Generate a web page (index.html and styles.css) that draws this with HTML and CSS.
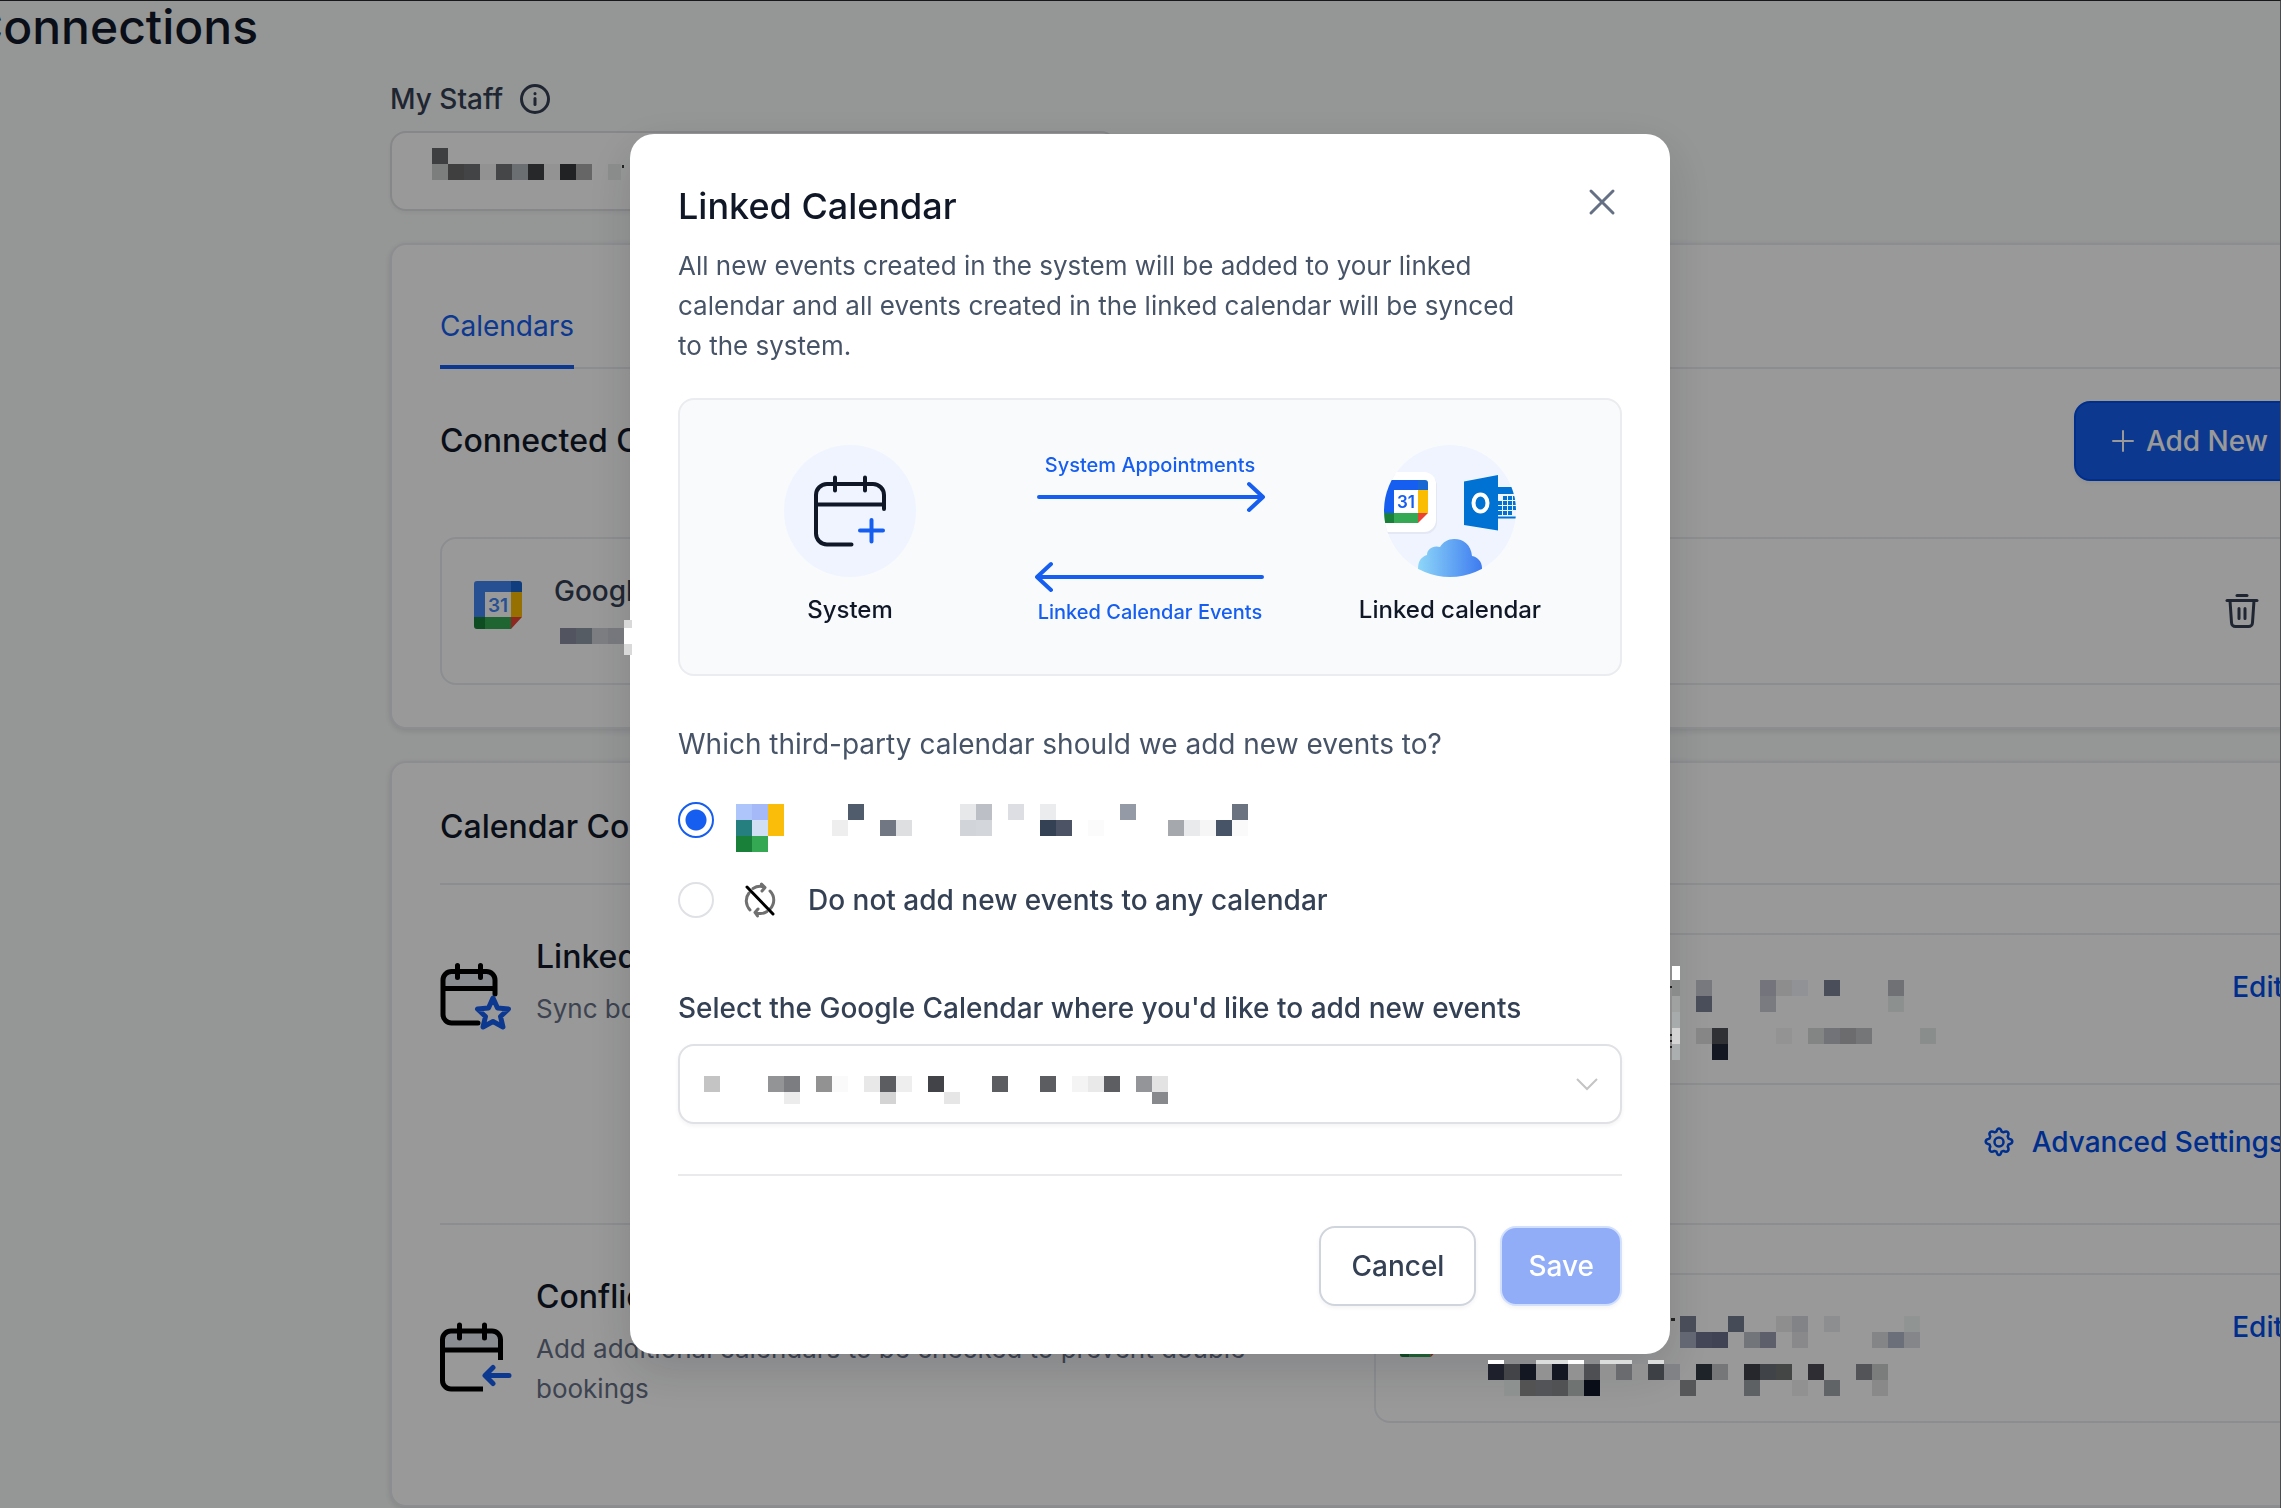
FILE: index.html
```html
<!DOCTYPE html>
<html lang="en">
  <head>
    <meta charset="utf-8">
    <meta name="viewport" content="width=device-width, initial-scale=1.0">
    <title>Connections</title>
    <link rel="stylesheet" href="styles.css">
  </head>
  <body>
    <svg class="defs" aria-hidden="true">
      <symbol id="gcal" viewBox="0 0 48 48">
        <path fill="#fff" d="M11 11h26v25H11z"/>
        <path fill="#4285f4" d="M3 0h34v11H11v25H0V3a3 3 0 0 1 3-3z"/>
        <path fill="#1967d2" d="M37 0h8a3 3 0 0 1 3 3v8H37z"/>
        <path fill="#fbbc04" d="M37 11h11v25H37z"/>
        <path fill="#34a853" d="M11 36h26v12H11z"/>
        <path fill="#188038" d="M0 36h11v12H3a3 3 0 0 1-3-3z"/>
        <path fill="#ea4335" d="M37 36h11L37 48z"/>
        <text x="24" y="31" text-anchor="middle" font-size="19" font-weight="600" fill="#4285f4">31</text>
      </symbol>
    </svg>

    <div class="page">
      <h1>Connections</h1>
      <main class="content">
        <div class="field-label">
          <label for="staff">My Staff</label>
          <svg width="30" height="30" viewBox="0 0 30 30" fill="none" stroke="#344054" stroke-width="3" stroke-linecap="round"><circle cx="15" cy="15" r="13.5"/><path d="M15 14.5v6"/><path d="M15 9.5v.2"/></svg>
        </div>
        <div class="select-wrap staff">
          <select id="staff"><option></option></select>
          <svg class="mosaic select-value staff-value" width="192" height="32" viewBox="0 0 192 32">
            <rect x="0" y="0" fill="#3d3f41"/>
            <rect x="0" y="16" fill="#7c7d7d"/><rect x="16" y="16" fill="#3f3f3f"/><rect x="32" y="16" fill="#424446"/><rect x="48" y="16" fill="#929292"/>
            <rect x="64" y="16" fill="#444648"/><rect x="80" y="16" fill="#6c6f72"/><rect x="96" y="16" fill="#26282a"/><rect x="112" y="16" fill="#939393"/>
            <rect x="128" y="16" fill="#202223"/><rect x="144" y="16" fill="#666"/>
            <path fill="#8a8c8c" d="M176 16h13v16h-13z"/><path fill="#222" d="M190 17h3v3h-3z"/>
          </svg>
        </div>

        <section class="card calendars">
          <nav class="tabs"><a class="tab" href="#calendars">Calendars</a></nav>
          <div class="card-head">
            <h2>Connected Calendars</h2>
            <button class="btn btn-primary" type="button">
              <svg width="22" height="22" viewBox="0 0 22 22" fill="none" stroke="#fff" stroke-width="2" stroke-linecap="round"><path d="M11 1v20M1 11h20"/></svg>
              Add New
            </button>
          </div>
          <div class="account">
            <svg class="account-logo" width="48" height="48"><use href="#gcal"/></svg>
            <div class="account-info">
              <span>Google Calendar</span>
              <svg class="mosaic" width="80" height="36" viewBox="-6 0 80 36">
                <rect x="0" y="8" fill="#52555f"/><rect x="16" y="8" fill="#565c63"/><rect x="32" y="8" fill="#7c7d80"/><rect x="48" y="8" fill="#75777d"/>
                <path fill="#d9d9d9" d="M64 0h8v35h-8z"/><path fill="#fff" d="M64 8h8v16h-8z"/>
              </svg>
            </div>
            <button class="icon-btn" type="button" aria-label="Delete">
              <svg width="40" height="40" viewBox="0 0 40 40" fill="none" stroke="#344054" stroke-width="3" stroke-linecap="round" stroke-linejoin="round"><path d="M15 4.500h10"/><path d="M5 9.500h30"/><path d="M8 9.500l1.500 22a4 4 0 0 0 4 4h13a4 4 0 0 0 4-4l1.500-22"/><path d="M17 17.500v10M23 17.500v10"/></svg>
            </button>
          </div>
        </section>

        <section class="card config">
          <h2>Calendar Configuration</h2>
          <div class="setting setting-linked">
            <div class="setting-about">
              <svg width="72" height="68" viewBox="0 0 72 68" fill="none" stroke="#000" stroke-width="5" stroke-linecap="round" stroke-linejoin="round">
                <path stroke="none" fill="#e4eaf2" d="M3 25V16a8 8 0 0 1 8-8h36a8 8 0 0 1 8 8v9z"/>
                <path d="M55 31V17a8.500 8.500 0 0 0-8.500-8.500h-35A8.500 8.500 0 0 0 3 17v34.500A8.500 8.500 0 0 0 11.500 60H38M3 25.500h52M17.500 2.500v12M40.500 2.500v12"/>
                <path stroke="#155eef" fill="#fff" d="M53 35l4.500 10 11 1-8 7.500L63 64l-10-5.500L43 64l2.500-10.500-8-7.500 11-1z"/>
              </svg>
              <div class="setting-text">
                <h3>Linked Calendar</h3>
                <p>Sync both your calendars</p>
              </div>
            </div>
            <div class="setting-value">
              <div class="chosen">
                <svg class="chosen-logo" width="40" height="40"><use href="#gcal"/></svg>
                <svg class="mosaic" width="448" height="112" viewBox="0 -27 448 112">
                  <path fill="#fff" d="M184-14h8V0h-8z"/><path fill="#8a8c8c" d="M184 0h8v16h-8z"/><path fill="#a0a2a2" d="M184 16h8v16h-8z"/><path fill="#a8abab" d="M184 32h8v16h-8z"/><path fill="#d4d4d4" d="M184 48h8v16h-8z"/><path fill="#abafaf" d="M184 64h8v16h-8z"/>
                  <path fill="#222" d="M182 6h2v2h-2zM182 54h2v2h-2zM182 60h2v2h-2zM182 66h2v2h-2z"/>
                  <rect x="208" y="0" fill="#78797f"/><rect x="208" y="16" fill="#4a4e5b"/><rect x="272" y="0" fill="#73747c"/><rect x="272" y="16" fill="#7a7b80"/>
                  <rect x="288" y="0" fill="#8d8d8d"/><rect x="304" y="0" fill="#909296"/><rect x="336" y="0" fill="#4a4e5b"/><rect x="400" y="0" fill="#6f7175"/><rect x="400" y="16" fill="#8c908f"/>
                  <rect x="208" y="48" fill="#868686"/><rect x="224" y="48" fill="#303135"/><rect x="224" y="64" fill="#131722"/><rect x="288" y="48" fill="#939393"/>
                  <rect x="320" y="48" fill="#838484"/><rect x="336" y="48" fill="#717378"/><rect x="352" y="48" fill="#6c6c6e"/><rect x="368" y="48" fill="#757678"/><rect x="432" y="48" fill="#898d8c"/>
                </svg>
                <a class="link" href="#edit-linked">Edit</a>
              </div>
              <a class="link advanced" href="#advanced">
                <svg width="30" height="30" viewBox="0 0 30 30" fill="none" stroke="#004eeb" stroke-width="2.500" stroke-linejoin="round"><circle cx="15" cy="15" r="4.500"/><path d="M12.500 4.500C13 2.500 13.500 1.500 15 1.500s2 1 2.500 3l2 .8c2-1.200 3.300-1.200 4.300-.2s1 2.300-.1 4.200l.8 2.200c2.300.5 3.800 1.500 3.800 3s-1.500 2.500-3.800 3l-.8 2.200c1.200 2 1.200 3.300.1 4.300s-2.300 1-4.300-.1l-2 .8c-.5 2-1 3.300-2.500 3.300s-2-1.300-2.500-3.300l-2-.8c-2 1.200-3.300 1.200-4.300.1s-1-2.300.1-4.300l-.8-2.200c-2.300-.5-3.800-1.500-3.800-3s1.500-2.500 3.800-3l.8-2.200C5.100 7.400 5.100 6.100 6.200 5.100s2.300-1 4.300.2z"/></svg>
                Advanced Settings
              </a>
            </div>
          </div>
          <div class="setting">
            <div class="setting-about">
              <svg width="72" height="70" viewBox="0 0 72 70" fill="none" stroke="#000" stroke-width="5" stroke-linecap="round" stroke-linejoin="round">
                <path stroke="none" fill="#e4eaf2" d="M3 27V17a8 8 0 0 1 8-8h41a8 8 0 0 1 8 8v10z"/>
                <path stroke-linecap="butt" d="M60.500 38V17.500A8.500 8.500 0 0 0 52 9H11a8.500 8.500 0 0 0-8.500 8.500v41A8.500 8.500 0 0 0 11 67h32M3 28h57"/>
                <path d="M19.500 3v13M44.500 3v13"/>
                <path stroke="#155eef" d="M69 53.500H46M53 45.500l-8 8 8 8"/>
              </svg>
              <div class="setting-text">
                <h3>Conflict Calendars</h3>
                <p>Add additional calendars to be checked to prevent double bookings</p>
              </div>
            </div>
            <div class="setting-value">
              <div class="chosen">
                <svg class="chosen-logo" width="40" height="40"><use href="#gcal"/></svg>
                <svg class="mosaic" width="448" height="112" viewBox="0 -24 448 112">
                  <path fill="#222" d="M183 2h4v3h-4z"/>
                  <rect x="192" y="0" fill="#484d59"/><rect x="240" y="0" fill="#454b57"/><rect x="288" y="0" fill="#8e8e8e"/><rect x="304" y="0" fill="#828386"/><rect x="336" y="0" fill="#8c8e8f"/><rect x="416" y="0" fill="#909493"/>
                  <rect x="192" y="16" fill="#636673"/><rect x="208" y="16" fill="#424656"/><rect x="224" y="16" fill="#3f4353"/><rect x="256" y="16" fill="#727579"/><rect x="272" y="16" fill="#5d606b"/><rect x="304" y="16" fill="#89898b"/><rect x="384" y="16" fill="#838586"/><rect x="400" y="16" fill="#6b6f7a"/><rect x="416" y="16" fill="#85868a"/>
                  <path fill="#fff" d="M0 44h16v4H0zM80 44h16v4H80z"/><path fill="#dcdede" d="M48 44h32v4H48zM112 44h32v4h-32zM160 44h16v4h-16z"/>
                  <path fill="#929292" d="M48 48h16v16H48zM80 48h16v16H80zM112 48h16v16h-16zM144 48h16v16h-16z"/>
                  <rect x="0" y="48" fill="#1e212c"/><rect x="16" y="48" fill="#434447"/><rect x="32" y="48" fill="#131722"/><rect x="64" y="48" fill="#131722"/><rect x="96" y="48" fill="#4d4f52"/><rect x="128" y="48" fill="#696b6f"/><rect x="160" y="48" fill="#3d4145"/><rect x="176" y="48" fill="#808285"/><rect x="208" y="48" fill="#1e2229"/><rect x="224" y="48" fill="#767779"/><rect x="256" y="48" fill="#25272d"/><rect x="272" y="48" fill="#404347"/><rect x="288" y="48" fill="#444646"/><rect x="320" y="48" fill="#2d2d33"/><rect x="368" y="48" fill="#525458"/><rect x="384" y="48" fill="#7b7c7c"/>
                  <rect x="16" y="64" fill="#8d9190"/><rect x="32" y="64" fill="#535353"/><rect x="48" y="64" fill="#535457"/><rect x="64" y="64" fill="#505253"/><rect x="80" y="64" fill="#6f7371"/><rect x="96" y="64" fill="#090d18"/><rect x="192" y="64" fill="#555759"/><rect x="256" y="64" fill="#5d6164"/><rect x="304" y="64" fill="#919191"/><rect x="336" y="64" fill="#606466"/><rect x="384" y="64" fill="#898989"/>
                </svg>
                <a class="link" href="#edit-conflict">Edit</a>
              </div>
            </div>
          </div>
        </section>
      </main>
    </div>

    <div class="overlay">
      <form class="modal" role="dialog" aria-labelledby="modalTitle">
        <header class="modal-head">
          <h2 id="modalTitle">Linked Calendar</h2>
          <button class="icon-btn" type="button" aria-label="Close">
            <svg width="40" height="40" viewBox="0 0 40 40" fill="none" stroke="#667085" stroke-width="3" stroke-linecap="round"><path d="M9 9l22 22M31 9L9 31"/></svg>
          </button>
        </header>
        <p class="modal-desc">All new events created in the system will be added to your linked calendar and all events created in the linked calendar will be synced to the system.</p>

        <div class="diagram">
          <figure>
            <svg width="132" height="132" viewBox="0 0 132 132" fill="none" stroke="#101828" stroke-width="4" stroke-linecap="round" stroke-linejoin="round">
              <circle cx="66" cy="66" r="66" fill="#eff4ff" stroke="none"/>
              <path d="M100 64V50a11 11 0 0 0-11-11H43a11 11 0 0 0-11 11v38.500a11 11 0 0 0 11 11h24.500M32 59.500h68M51 32.500v13M81 32.500v13"/>
              <path stroke="#155eef" d="M87.500 75v21.500M76 85.500h23"/>
            </svg>
            <figcaption>System</figcaption>
          </figure>
          <div class="flow">
            <span>System Appointments</span>
            <svg class="arrow-right" width="230" height="32" viewBox="0 0 230 32"><path d="M4 16h224M214 3l14 13-14 13"/></svg>
            <svg class="arrow-left" width="230" height="32" viewBox="0 0 230 32"><path d="M227 16H3M16 3L2 16l14 13"/></svg>
            <span>Linked Calendar Events</span>
          </div>
          <figure>
            <svg width="132" height="132" viewBox="0 0 132 132">
              <defs>
                <clipPath id="disc"><circle cx="66" cy="66" r="66"/></clipPath>
                <linearGradient id="sky" x1="0" y1="0" x2="1" y2="0"><stop offset="0" stop-color="#8ed7f8"/><stop offset="1" stop-color="#3e7bf0"/></linearGradient>
              </defs>
              <g clip-path="url(#disc)">
                <circle cx="66" cy="66" r="66" fill="#eff4ff"/>
                <rect x="-8" y="29" width="61" height="60" rx="12" fill="#e3e8f4"/>
                <rect x="-8" y="27" width="60" height="60" rx="12" fill="#fff"/>
                <path fill="#155eef" d="M3 35h31v10H10v23H0V38a3 3 0 0 1 3-3z"/>
                <path fill="#1967d2" d="M34 35h7a3 3 0 0 1 3 3v7H34z"/>
                <path fill="#fbbc04" d="M34 45h10v23H34z"/>
                <path fill="#34a853" d="M10 68h24v10H10z"/>
                <path fill="#188038" d="M0 68h10v10H0z"/>
                <path fill="#ea4335" d="M34 68h10L34 78z"/>
                <text x="22" y="63" text-anchor="middle" font-size="17" font-weight="600" fill="#155eef">31</text>
                <path fill="#0072d4" d="M80 36.500L114 30v55.500L80 80zM114 42h18v7h-18z"/>
                <path fill="none" stroke="#0072d4" stroke-width="4" stroke-dasharray="4 1" d="M119 53h14M114 58h18M114 63h18M114 68h14"/>
                <path fill="#0072d4" d="M114 71.500h18v2h-18z"/>
                <ellipse cx="96.500" cy="58" rx="7" ry="8.500" fill="none" stroke="#fff" stroke-width="4"/>
                <path fill="url(#sky)" d="M34 124c0-8 3-12 9-14 0-6 6-10 13-8 3-5 8-8 14-8 10 0 17 6 18 17 6 1 10 6 10 12v12H34z"/>
              </g>
            </svg>
            <figcaption>Linked calendar</figcaption>
          </figure>
        </div>

        <fieldset class="choices">
          <legend>Which third-party calendar should we add new events to?</legend>
          <label class="choice">
            <input type="radio" name="target" checked aria-label="Google Calendar">
            <svg class="mosaic choice-mosaic" width="512" height="48" viewBox="0 0 512 48">
              <rect x="0" y="0" fill="#aec5fb"/><rect x="16" y="0" fill="#a5b8f8"/><rect x="32" y="0" fill="#fabe0a"/><rect x="0" y="16" fill="#267f7f"/><rect x="16" y="16" fill="#d0dff3"/><rect x="32" y="16" fill="#fabe0a"/><rect x="0" y="32" fill="#188038"/><rect x="16" y="32" fill="#34a853"/>
              <rect x="112" y="0" fill="#505b6b"/><rect x="224" y="0" fill="#e6e8ea"/><rect x="240" y="0" fill="#bcc0c6"/><rect x="272" y="0" fill="#dcdee4"/><rect x="304" y="0" fill="#ebecee"/><rect x="384" y="0" fill="#949ba6"/><rect x="496" y="0" fill="#6b7280"/>
              <rect x="96" y="16" fill="#eee"/><rect x="144" y="16" fill="#727784"/><rect x="160" y="16" fill="#dedfe0"/><rect x="224" y="16" fill="#d1d5d9"/><rect x="240" y="16" fill="#d3d6db"/><rect x="304" y="16" fill="#344054"/><rect x="320" y="16" fill="#4c5364"/><rect x="352" y="16" fill="#fbfbfb"/><rect x="432" y="16" fill="#a5a8ad"/><rect x="448" y="16" fill="#e9eaeb"/><rect x="464" y="16" fill="#f6f6f7"/><rect x="480" y="16" fill="#475467"/><rect x="496" y="16" fill="#fafafa"/>
            </svg>
          </label>
          <label class="choice">
            <input type="radio" name="target">
            <svg class="choice-icon" width="48" height="40" viewBox="0 0 48 40" fill="none" stroke="#707070" stroke-width="3" stroke-linecap="round" stroke-linejoin="round">
              <path d="M17 8.500c4-2.500 8-2.500 11-1.500M25.500 4l3.500 3.500-3 3.500M34 11c5 5 5 13 0 18M13 13c-4 5-3.500 12 1 17M31 31.500c-3.500 2.500-7 2.500-11 1.500M22 29l-3 3.500 2.500 3.500"/>
              <path stroke="#000" d="M11 7l26 27"/>
            </svg>
            Do not add new events to any calendar
          </label>
        </fieldset>

        <label class="target-label" for="googleCalendar">Select the Google Calendar where you'd like to add new events</label>
        <div class="select-wrap">
          <select id="googleCalendar"><option></option></select>
          <svg class="mosaic select-value target-value" width="464" height="28" viewBox="0 0 464 28">
            <rect x="0" y="0" fill="#c4c4c4"/><rect x="64" y="0" fill="#939496"/><rect x="80" y="0" fill="#7c7d80"/><rect x="112" y="0" fill="#929292"/><rect x="128" y="0" fill="#fafafa"/><rect x="160" y="0" fill="#e8e8e8"/><rect x="176" y="0" fill="#5b5d61"/><rect x="192" y="0" fill="#eee"/><rect x="224" y="0" fill="#424348"/><rect x="288" y="0" fill="#5c5d61"/><rect x="336" y="0" fill="#5c5d60"/><rect x="368" y="0" fill="#f4f4f4"/><rect x="384" y="0" fill="#e9e9e9"/><rect x="400" y="0" fill="#5d5e62"/><rect x="432" y="0" fill="#949599"/><rect x="448" y="0" fill="#e3e3e3"/>
            <rect x="80" y="16" fill="#ececec"/><rect x="176" y="16" fill="#d4d4d4"/><rect x="240" y="16" fill="#e6e6e6"/><rect x="448" y="16" fill="#88898c"/>
          </svg>
          <svg class="chevron" width="24" height="24" viewBox="0 0 24 24" fill="none" stroke="#c4c4c4" stroke-width="2"><path d="M2 7l10 10L22 7"/></svg>
        </div>

        <footer class="modal-foot">
          <button class="btn" type="button">Cancel</button>
          <button class="btn btn-save" type="submit" disabled>Save</button>
        </footer>
      </form>
    </div>
  </body>
</html>
```
FILE: styles.css
```css
* {
  box-sizing: border-box;
}
html {
  font-family: Inter, 'Liberation Sans', sans-serif;
  font-size: 28px;
  line-height: 40px;
  color: #344054;
  background-color: #f9fbfa;
}
body {
  margin: 0;
  min-height: 100vh;
  overflow: hidden;
}
h1, h2, h3, p, figure, fieldset {
  margin: 0;
  padding: 0;
  border: 0;
}
h1, h2, h3 {
  color: #101828;
  font-weight: 500;
}
svg {
  display: block;
  flex-shrink: 0;
}
a {
  text-decoration: none;
}
button, select {
  font-family: inherit;
  font-size: 28px;
  line-height: 40px;
  color: inherit;
}
.defs {
  position: absolute;
  width: 0;
  height: 0;
}
/* hidden names, drawn over the dimmed page */
.mosaic {
  position: relative;
  z-index: 20;
  shape-rendering: crispEdges;
}
.mosaic rect {
  width: 16px;
  height: 16px;
}

/* page */
h1 {
  margin: 0 0 25px -32px;
  font-size: 48px;
  line-height: 54px;
}
h2 {
  font-size: 32px;
  line-height: 48px;
}
h3 {
  font-size: 32px;
  line-height: 40px;
}
.content {
  margin: 0 -77px 0 390px;
}
.field-label {
  display: flex;
  align-items: center;
  gap: 17px;
  margin-bottom: 12px;
  font-weight: 500;
}
.select-wrap {
  position: relative;
}
.select-wrap select {
  appearance: none;
  display: block;
  width: 100%;
  height: 80px;
  padding: 0 24px;
  border: 2px solid #e0e1e5;
  border-radius: 16px;
  background-color: #fff;
  box-shadow: 0 2px 4px rgba(16, 24, 40, .05);
}
.select-value {
  position: absolute;
  top: 32px;
  left: 26px;
}
.staff {
  width: 727px;
  margin-bottom: 32px;
}
.staff-value {
  top: 17px;
  left: 42px;
}
.chevron {
  position: absolute;
  top: 28px;
  right: 23px;
  pointer-events: none;
}
.card {
  margin-bottom: 32px;
  border: 2px solid #eaecf0;
  border-radius: 16px;
  background-color: #fff;
  box-shadow: 0 2px 6px rgba(16, 24, 40, .12);
}
.calendars {
  padding: 48px 48px 42px;
}
.config {
  padding: 40px 48px 82px;
}
.tabs {
  display: flex;
  margin-bottom: 32px;
  box-shadow: inset 0 -2px #eaecf0;
}
.tab {
  padding: 13px 0 19px;
  border-bottom: 4px solid #155eef;
  color: #155eef;
}
.card-head {
  display: flex;
  justify-content: space-between;
  align-items: center;
  margin-bottom: 56px;
}
.btn {
  display: flex;
  align-items: center;
  gap: 12px;
  height: 80px;
  padding: 0 30px;
  border: 2px solid #d0d5dd;
  border-radius: 16px;
  background-color: #fff;
  font-weight: 500;
  box-shadow: 0 2px 4px rgba(16, 24, 40, .05);
}
.btn-primary {
  padding: 0 38px 0 36px;
  border-color: #004eeb;
  background-color: #155eef;
  color: #fff;
}
.btn-save {
  padding: 0 26px;
  border-color: #d1e0ff;
  background-color: #92adf8;
  color: #fff;
}
.icon-btn {
  padding: 0;
  border: 0;
  background: none;
}
.account {
  display: flex;
  gap: 32px;
  height: 148px;
  padding: 32px 44px 0 32px;
  border: 2px solid #eaecf0;
  border-radius: 16px;
}
.account-logo {
  margin-top: 10px;
}
.account-info {
  flex: 1;
  font-weight: 500;
}
.account-info .mosaic {
  margin-top: 9px;
}
.account .icon-btn {
  align-self: flex-start;
  margin-top: 20px;
}
.setting {
  display: grid;
  grid-template-columns: 1fr 1fr;
  padding-top: 48px;
  border-top: 2px solid #eaecf0;
}
.setting-linked {
  margin-top: 32px;
  padding-bottom: 61px;
}
.setting-about {
  display: flex;
  align-self: flex-start;
  align-items: center;
  gap: 24px;
  padding-top: 4px;
}
.setting-linked .setting-about {
  padding-top: 2px;
}
.setting-about svg {
  margin-top: 28px;
}
.setting-text {
  max-width: 780px;
}
.setting-text p {
  margin-top: 12px;
  font-size: 26px;
  color: #667085;
}
.chosen {
  display: flex;
  align-items: center;
  gap: 48px;
  height: 150px;
  padding: 0 23px 0 24px;
  border: 2px solid #eaecf0;
  border-radius: 16px;
}
.setting-linked .chosen {
  height: 152px;
}
.chosen-logo {
  align-self: flex-start;
  margin-top: 42px;
}
.link {
  color: #004eeb;
  font-weight: 500;
}
.chosen .link {
  align-self: flex-start;
  margin: 32px 0 0 auto;
}
.advanced {
  display: flex;
  justify-content: flex-end;
  align-items: center;
  gap: 18px;
  padding: 37px 24px 0 0;
}

/* dialog */
.overlay {
  position: fixed;
  inset: 0;
  z-index: 10;
  display: flex;
  justify-content: center;
  align-items: flex-start;
  padding: 133px 0 0 20px;
  border-top: 1px solid #16181a;
  border-right: 1px solid #4a4d50;
  background-color: rgba(0, 0, 0, .4);
}
.modal {
  width: 1040px;
  padding: 48px;
  border-radius: 24px;
  background-color: #fff;
  box-shadow: 0 16px 48px rgba(16, 24, 40, .16);
}
.modal-head {
  display: flex;
  justify-content: space-between;
  align-items: flex-start;
}
.modal-head h2 {
  font-size: 36px;
}
.modal-desc {
  max-width: 850px;
  margin: 16px 0 32px;
  font-size: 26px;
  color: #475467;
}
.diagram {
  display: grid;
  grid-template-columns: repeat(3, 300px);
  justify-content: center;
  align-items: end;
  padding: 45px 0 48px;
  border: 2px solid #eaecf0;
  border-radius: 16px;
  background-color: #f9fafc;
}
figure {
  display: flex;
  flex-direction: column;
  align-items: center;
  gap: 17px;
}
figcaption {
  color: #101828;
  font-size: 24px;
  font-weight: 500;
  line-height: 32px;
}
.flow {
  display: flex;
  flex-direction: column;
  align-items: center;
  gap: 2px;
  color: #155eef;
  font-size: 20px;
  font-weight: 500;
  line-height: 28px;
}
.flow svg {
  fill: none;
  stroke: #155eef;
  stroke-width: 4;
  stroke-linecap: round;
  stroke-linejoin: round;
}
.flow .arrow-right {
  margin-bottom: 46px;
}
.flow .arrow-left {
  margin-bottom: 3px;
}
.choices {
  margin-top: 48px;
}
legend {
  padding: 0;
  margin-bottom: 36px;
  color: #475467;
}
.choice {
  display: flex;
  align-items: center;
  height: 40px;
  margin-bottom: 40px;
  font-weight: 500;
}
.choice input {
  appearance: none;
  flex-shrink: 0;
  width: 36px;
  height: 36px;
  margin: 0 22px 0 0;
  border: 2px solid #e0e1e5;
  border-radius: 50%;
  background-color: #fff;
}
.choice input:checked {
  border-color: #155eef;
  background-image: radial-gradient(circle, #155eef 10px, transparent 11px);
}
.choice-mosaic {
  align-self: flex-start;
  margin-top: 4px;
}
.choice-icon {
  margin-right: 24px;
}
.target-label {
  display: block;
  margin: 28px 0 16px;
  font-weight: 500;
}
.modal-foot {
  display: flex;
  justify-content: flex-end;
  gap: 24px;
  margin-top: 50px;
  padding-top: 50px;
  border-top: 2px solid #eaeaec;
}
```
